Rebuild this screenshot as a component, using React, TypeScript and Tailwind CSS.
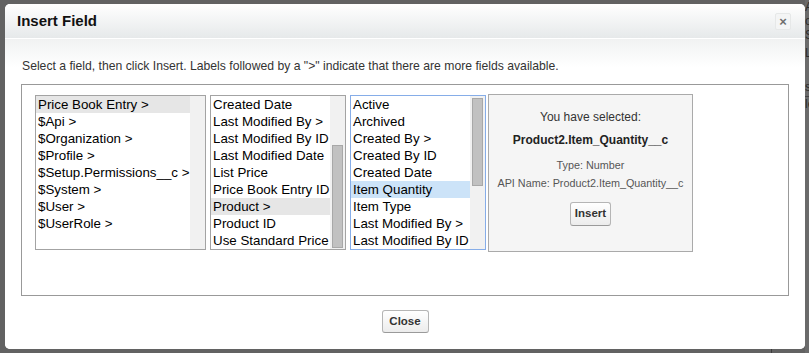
import React from 'react';

// Insert Field dialog (merge field picker)

type Row = { label: string; state?: 'gray' | 'blue' };

const objects: Row[] = [
  { label: 'Price Book Entry >', state: 'gray' },
  { label: '$Api >' },
  { label: '$Organization >' },
  { label: '$Profile >' },
  { label: '$Setup.Permissions__c >' },
  { label: '$System >' },
  { label: '$User >' },
  { label: '$UserRole >' },
];

const entryFields: Row[] = [
  { label: 'Created Date' },
  { label: 'Last Modified By >' },
  { label: 'Last Modified By ID' },
  { label: 'Last Modified Date' },
  { label: 'List Price' },
  { label: 'Price Book Entry ID' },
  { label: 'Product >', state: 'gray' },
  { label: 'Product ID' },
  { label: 'Use Standard Price' },
];

const productFields: Row[] = [
  { label: 'Active' },
  { label: 'Archived' },
  { label: 'Created By >' },
  { label: 'Created By ID' },
  { label: 'Created Date' },
  { label: 'Item Quantity', state: 'blue' },
  { label: 'Item Type' },
  { label: 'Last Modified By >' },
  { label: 'Last Modified By ID' },
];

interface FieldListProps {
  rows: Row[];
  width: string;
  focused?: boolean;
  thumb?: string; // tailwind classes for the scrollbar thumb, none = no thumb
}

const FieldList: React.FC<FieldListProps> = ({ rows, width, focused = false, thumb }) => (
  <div
    className={`${width} h-[155px] flex bg-white border overflow-hidden ${
      focused ? 'border-[#86ade8]' : 'border-[#a3a3a3]'
    }`}
  >
    <div className="flex-1 min-w-0">
      {rows.map(row => (
        <div
          key={row.label}
          className={`h-[17px] leading-[17px] pl-[2px] whitespace-nowrap text-[13.33px] text-black ${
            row.state === 'gray' ? 'bg-[#e6e6e6]' : row.state === 'blue' ? 'bg-[#cce3f8]' : ''
          }`}
        >
          {row.label}
        </div>
      ))}
    </div>
    <div className="w-[15px] h-full bg-[#f1f1f1] flex flex-col px-[2px]">
      {thumb && <div className={`${thumb} w-full bg-[#c1c1c1] border border-[#a8a8a8]`} />}
    </div>
  </div>
);

const Button: React.FC<{ children: React.ReactNode; className?: string }> = ({ children, className = '' }) => (
  <button
    className={`flex items-center justify-center rounded-[3px] border border-[#b5b5b5] border-b-[#9a9a9a] bg-gradient-to-b from-white to-[#ececec] text-[11.5px] font-bold text-[#333] ${className}`}
  >
    {children}
  </button>
);

export default function App() {
  return (
    <div
      className="relative w-[809px] h-[353px] bg-[#626262] overflow-hidden pt-[4px] pl-[5px]"
      style={{ fontFamily: '"Liberation Sans", Arial, sans-serif' }}
    >
      {/* page behind the overlay, peeking out on the right */}
      <div className="absolute right-0 top-0 w-[4px] h-full bg-[#6b6b6b] text-[12px] leading-[14px] text-[#2c2c2c] overflow-hidden">
        <div>ABS</div>
        <div>o</div>
        <div>S</div>
        <div className="mt-[4px]">LI</div>
        <div className="mt-[20px]">s</div>
        <div className="mt-[2px] border-t border-[#444]">le</div>
      </div>
      <div className="absolute left-[771px] bottom-0 w-px h-[5px] bg-[#3c3c3c]" />

      {/* dialog */}
      <div className="relative w-[800px] h-[345px] bg-white rounded-[5px] overflow-hidden flex flex-col">
        {/* header */}
        <div className="h-[35px] shrink-0 flex items-center justify-between pl-[12px] pr-[14px] bg-gradient-to-b from-white to-[#e6e9ea] border-b border-white">
          <h2 className="text-[15px] font-bold text-[#111] pt-[1px]">Insert Field</h2>
          <div className="w-[16px] h-[17px] mt-[1px] flex items-center justify-center rounded-[2px] bg-[#f4f5f5] border border-[#e6e8e8] text-[13px] font-bold leading-none text-[#6e6e6e]">
            ×
          </div>
        </div>

        {/* body */}
        <div className="flex-1 bg-gradient-to-b from-[#f1f2f2] to-white to-[28px] px-[16px] pt-[20px]">
          <p className="ml-[1px] h-[14px] leading-[14px] text-[12.2px] text-[#333]">
            Select a field, then click Insert. Labels followed by a "&gt;" indicate that there are more fields available.
          </p>

          <div className="mt-[11px] h-[212px] border border-[#999] bg-white pl-[13px] pt-[9px]">
            <div className="flex items-start">
              <div className="pt-px flex gap-[4px]">
                <FieldList rows={objects} width="w-[171px]" />
                <FieldList rows={entryFields} width="w-[136px]" thumb="mt-[49px] h-[103px]" />
                <FieldList rows={productFields} width="w-[136px]" focused thumb="mt-[2px] h-[88px]" />
              </div>

              {/* selection summary */}
              <div className="ml-[2px] w-[205px] h-[158px] border border-[#aaa] bg-[#f5f5f5] flex flex-col items-center text-center">
                <div className="mt-[15px] h-[14px] leading-[14px] text-[12px] text-[#333]">You have selected:</div>
                <div className="mt-[9px] h-[14px] leading-[14px] text-[12px] font-bold text-[#222]">
                  Product2.Item_Quantity__c
                </div>
                <div className="mt-[12px] h-[13px] leading-[13px] text-[10.8px] text-[#555]">Type: Number</div>
                <div className="mt-[5px] h-[13px] leading-[13px] text-[10.8px] text-[#555]">
                  API Name: Product2.Item_Quantity__c
                </div>
                <Button className="mt-[12px] w-[41px] h-[24px]">Insert</Button>
              </div>
            </div>
          </div>

          <div className="flex justify-center mt-[14px]">
            <Button className="w-[47px] h-[23px]">Close</Button>
          </div>
        </div>
      </div>
    </div>
  );
}
